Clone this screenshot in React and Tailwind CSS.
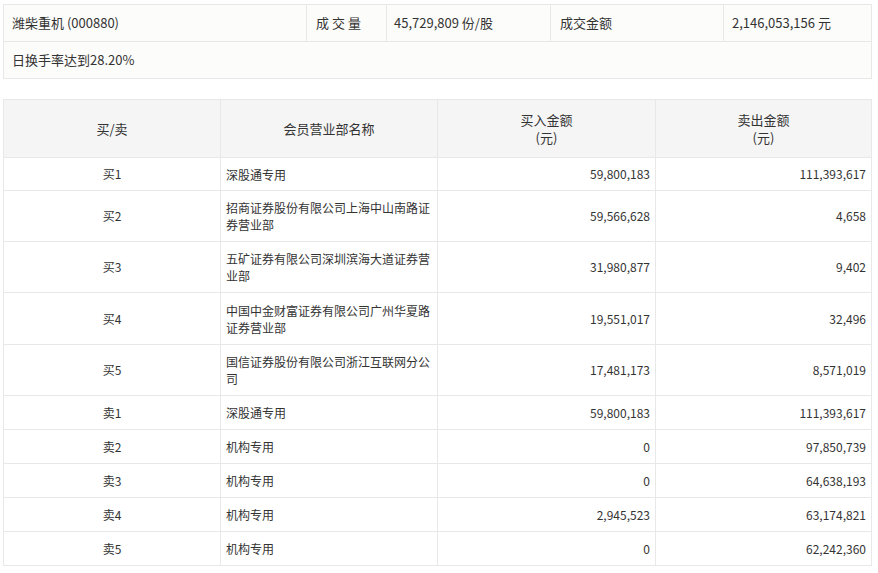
const rows = [
  ["买1","深股通专用","59,800,183","111,393,617"],
  ["买2","招商证券股份有限公司上海中山南路证券营业部","59,566,628","4,658"],
  ["买3","五矿证券有限公司深圳滨海大道证券营业部","31,980,877","9,402"],
  ["买4","中国中金财富证券有限公司广州华夏路证券营业部","19,551,017","32,496"],
  ["买5","国信证券股份有限公司浙江互联网分公司","17,481,173","8,571,019"],
  ["卖1","深股通专用","59,800,183","111,393,617"],
  ["卖2","机构专用","0","97,850,739"],
  ["卖3","机构专用","0","64,638,193"],
  ["卖4","机构专用","2,945,523","63,174,821"],
  ["卖5","机构专用","0","62,242,360"],
];
const hs = [33,51,51,52,51,34,34,34,34,34];
export default function App(){
  const f = {fontFamily:'"Noto Sans CJK SC","Liberation Sans",sans-serif'};
  return (
    <div style={f} className="w-[878px] h-[573px] bg-white text-[#333] overflow-hidden">
      <div className="mx-[3px] w-[869px] border-t border-[#e8e8e8] mt-[4px]">
        <div className="flex h-[37px] bg-[#fcfcfa] border-b border-x border-[#e8e8e8] text-[13px] items-stretch">
          <div className="w-[303px] border-r border-[#e8e8e8] flex items-center pl-[8px]">潍柴重机 (000880)</div>
          <div className="w-[80px] border-r border-[#e8e8e8] flex items-center pl-[9px] tracking-[3px]">成交量</div>
          <div className="w-[164px] border-r border-[#e8e8e8] flex items-center pl-[7px]">45,729,809 份/股</div>
          <div className="w-[173px] border-r border-[#e8e8e8] flex items-center pl-[9px]">成交金额</div>
          <div className="flex-1 flex items-center pl-[8px]">2,146,053,156 元</div>
        </div>
        <div className="h-[37px] bg-[#fcfcfa] border-b border-x border-[#e8e8e8] text-[13px] flex items-center pl-[8px]">日换手率达到28.20%</div>
      </div>
      <div className="mx-[3px] w-[869px] mt-[20px] border-t border-l border-[#e8e8e8] text-[12px]">
        <div className="flex h-[58px] bg-[#f5f5f5] text-[13px]">
          <div className="w-[217px] border-r border-b border-[#e8e8e8] flex items-center justify-center">买/卖</div>
          <div className="w-[217px] border-r border-b border-[#e8e8e8] flex items-center justify-center">会员营业部名称</div>
          <div className="w-[218px] border-r border-b border-[#e8e8e8] flex flex-col items-center justify-center leading-[18px]"><span>买入金额</span><span>(元)</span></div>
          <div className="flex-1 border-r border-b border-[#e8e8e8] flex flex-col items-center justify-center leading-[18px]"><span>卖出金额</span><span>(元)</span></div>
        </div>
        {rows.map((r,i)=>(
          <div key={i} className="flex" style={{height:hs[i]}}>
            <div className="w-[217px] border-r border-b border-[#e8e8e8] flex items-center justify-center">{r[0]}</div>
            <div className="w-[217px] border-r border-b border-[#e8e8e8] flex items-center px-[5px] leading-[17px]">{r[1]}</div>
            <div className="w-[218px] border-r border-b border-[#e8e8e8] flex items-center justify-end pr-[5px]">{r[2]}</div>
            <div className="flex-1 border-r border-b border-[#e8e8e8] flex items-center justify-end pr-[5px]">{r[3]}</div>
          </div>
        ))}
      </div>
    </div>
  );
}
